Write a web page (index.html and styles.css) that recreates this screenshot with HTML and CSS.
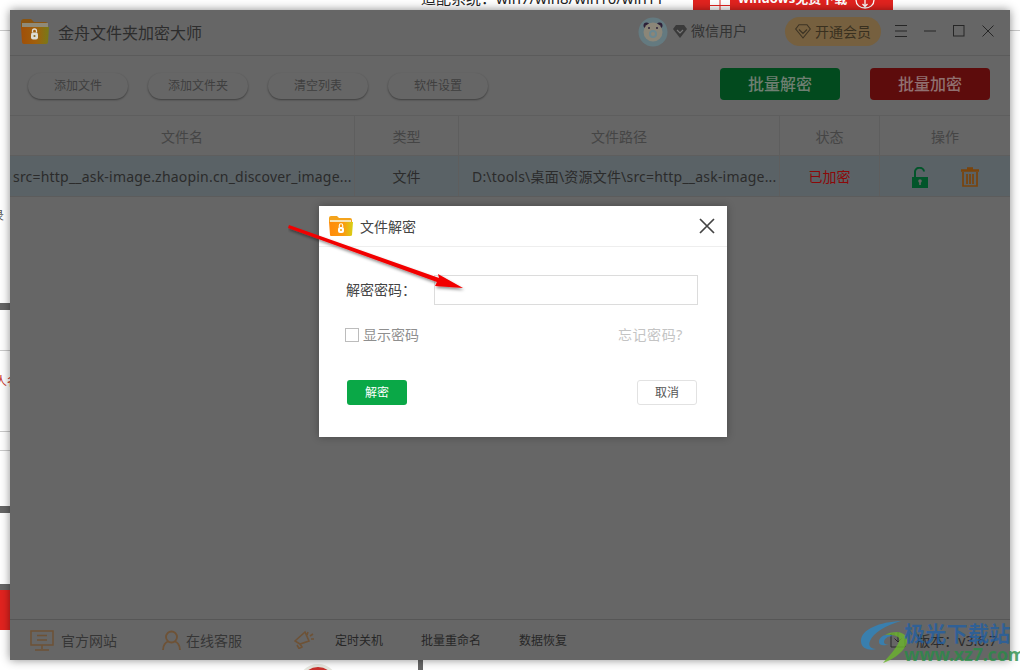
FILE: index.html
```html
<!DOCTYPE html>
<html lang="zh-CN">
<head>
<meta charset="utf-8">
<title>金舟文件夹加密大师</title>
<link rel="stylesheet" href="styles.css">
</head>
<body>
<div class="desk">
  <div class="bg-sys">适配系统：win7/win8/win10/win11</div>
  <div class="bg-dl">
    <svg class="bg-win" width="20" height="10" viewBox="0 0 20 10"><path d="M0 0h9.500v5H0zM10.500 0H20v5h-9.500zM0 6h9.500v4H0zM10.500 6H20v4h-9.500z" fill="#fff"/></svg>
    <span>windows免费下载</span>
    <svg class="bg-cloud" width="20" height="10" viewBox="0 0 20 10"><path d="M1 0c0 5 4 8 9 8s9-3 9-8M10 0v6M7.500 4L10 6.500 12.500 4" fill="none" stroke="#fff" stroke-width="1.300"/></svg>
  </div>
  <div class="bg-line bg-l1"></div>
  <div class="bg-line bg-r1"></div>
  <div class="bg-bar bg-b1"></div>
  <div class="bg-line bg-l2"></div>
  <div class="bg-line bg-l3"></div>
  <div class="bg-line bg-l4"></div>
  <div class="bg-bar bg-b2"></div>
  <div class="bg-bar bg-b3"></div>
  <div class="bg-red"></div>
  <div class="bg-txt bg-t1">录</div>
  <div class="bg-txt bg-t2">人名</div>
  <div class="bg-vbar"></div>
  <div class="bg-circle"></div>

  <div class="app">
    <header class="titlebar">
      <svg class="logo" width="30" height="28" viewBox="0 0 30 28">
        <defs><linearGradient id="lg1" x1="0" x2="1" y1="0" y2="0"><stop offset="0" stop-color="#a04f08"/><stop offset=".55" stop-color="#a0600c"/><stop offset="1" stop-color="#777a18"/></linearGradient></defs>
        <path d="M1 5q0-3 3-3h7l3 3h11q3 0 3 3v4H1z" fill="#8a5410"/>
        <path d="M2 6h26v4H2z" fill="#8f8a78"/>
        <path d="M1 10h28l-1 15q0 2-2 2H4q-2 0-2-2z" fill="url(#lg1)"/>
        <rect x="11" y="15.500" width="7" height="7" rx="2" fill="#dcdcd4"/>
        <path d="M12.500 15.500v-1.500a2 2 0 0 1 4 0v1.500" fill="none" stroke="#dcdcd4" stroke-width="1.300"/>
        <circle cx="14.500" cy="19" r="1.100" fill="#8a6a20"/>
      </svg>
      <h1 class="app-name">金舟文件夹加密大师</h1>
      <div class="title-right">
        <svg class="avatar" width="30" height="30" viewBox="0 0 30 30">
          <circle cx="15" cy="15" r="14.500" fill="#647a80"/>
          <circle cx="8.500" cy="8.500" r="3" fill="#2c2038"/><circle cx="21.500" cy="8.500" r="3" fill="#2c2038"/>
          <circle cx="15" cy="15" r="9.500" fill="#8b8678"/>
          <circle cx="15" cy="17" r="4" fill="#6b8790"/><circle cx="15" cy="17" r="2" fill="#8b8678"/>
          <circle cx="11" cy="11" r="1" fill="#2c2038"/><circle cx="19" cy="11" r="1" fill="#2c2038"/>
        </svg>
        <svg class="gem" width="14" height="13" viewBox="0 0 14 13"><path d="M3 0h8l3 4-7 9-7-9z" fill="#3a3a3a"/><path d="M4 5l3 3 3-3" fill="none" stroke="#777" stroke-width="1.200"/></svg>
        <span class="user">微信用户</span>
        <div class="vip">
          <svg width="16" height="15" viewBox="0 0 16 15"><path d="M4 .7h8l3.300 4.300L8 14 .7 5z M4 5.500l4 4 4-4" fill="none" stroke="#3c3324" stroke-width="1.100"/></svg>
          <span>开通会员</span>
        </div>
        <div class="win-ctl">
          <svg width="12" height="12" viewBox="0 0 12 12"><path d="M0 .5h12M0 6h12M0 11.500h12" stroke="#262626" stroke-width="1"/></svg>
          <svg width="12" height="12" viewBox="0 0 12 12"><path d="M0 6h12" stroke="#262626" stroke-width="1"/></svg>
          <svg width="12" height="12" viewBox="0 0 12 12"><rect x=".5" y=".5" width="10.500" height="10.500" fill="none" stroke="#262626" stroke-width="1"/></svg>
          <svg width="12" height="12" viewBox="0 0 12 12"><path d="M.5.5l11 11M11.500.5l-11 11" stroke="#262626" stroke-width="1"/></svg>
        </div>
      </div>
    </header>

    <div class="toolbar">
      <button class="pill">添加文件</button>
      <button class="pill">添加文件夹</button>
      <button class="pill">清空列表</button>
      <button class="pill">软件设置</button>
      <div class="toolbar-gap"></div>
      <button class="batch batch-green">批量解密</button>
      <button class="batch batch-red">批量加密</button>
    </div>

    <div class="grid grid-head">
      <div class="cell">文件名</div>
      <div class="cell">类型</div>
      <div class="cell">文件路径</div>
      <div class="cell">状态</div>
      <div class="cell cell-last">操作</div>
    </div>
    <div class="grid grid-row">
      <div class="cell cell-left">src=http__ask-image.zhaopin.cn_discover_image...</div>
      <div class="cell cell-dark">文件</div>
      <div class="cell cell-path">D:\tools\桌面\资源文件\src=http__ask-image...</div>
      <div class="cell cell-status">已加密</div>
      <div class="cell cell-last cell-ops">
        <svg width="17" height="21" viewBox="0 0 17 21"><path d="M4 10V5a4.500 4 0 0 1 9 -.5" fill="none" stroke="#02552a" stroke-width="2"/><path d="M1 10h16v11H1z" fill="#02552a"/><circle cx="9" cy="14" r="1.800" fill="#666"/><path d="M8.200 14h1.600v4H8.200z" fill="#666"/></svg>
        <svg width="18" height="20" viewBox="0 0 18 20"><path d="M6 1.500h6M0 3.500h18" stroke="#7a440c" stroke-width="2.400"/><path d="M2 5v14h14V5M6 7v10M9 7v10M12 7v10" fill="none" stroke="#7a440c" stroke-width="1.700"/></svg>
      </div>
    </div>

    <div class="app-body"></div>

    <footer class="footer">
      <div class="foot-item foot-site">
        <svg width="24" height="21" viewBox="0 0 24 21"><path d="M1 1h22v14H1zM12 15v4M5 20h14M7 5.500h10M7 10h10" fill="none" stroke="#6e5236" stroke-width="1.500"/></svg>
        <span>官方网站</span>
      </div>
      <div class="foot-item foot-service">
        <svg width="19" height="20" viewBox="0 0 19 20"><circle cx="9.500" cy="7" r="5.500" fill="none" stroke="#6e5236" stroke-width="1.800"/><path d="M1 20c0-5 3-8 5-8.500M18 20c0-5-3-8-5-8.500" fill="none" stroke="#6e5236" stroke-width="1.800"/></svg>
        <span>在线客服</span>
      </div>
      <div class="foot-item foot-timer">
        <svg width="22" height="20" viewBox="0 0 22 20"><path d="M1 12l10-9 4 9-9 3zM6 15l2 3-3 1.500-2-3.500M14 3l-1 3M19 5l-3 2M20 10h-3" fill="none" stroke="#6e5236" stroke-width="1.600"/></svg>
        <span class="foot-small foot-s1">定时关机</span>
      </div>
      <span class="foot-small foot-s2">批量重命名</span>
      <span class="foot-small foot-s3">数据恢复</span>
      <div class="foot-version">
        <svg width="16" height="16" viewBox="0 0 16 16"><path d="M5 2H1v13h14V6" fill="none" stroke="#2b2b2b" stroke-width="1"/><path d="M8 0v9M4.500 6.500L8 10l3.500-3.500" fill="none" stroke="#2b2b2b" stroke-width="1"/></svg>
        <span>版本：v3.6.7</span>
      </div>
    </footer>
  </div>

  <section class="dialog">
    <div class="dlg-head">
      <svg width="24" height="22" viewBox="0 0 24 22">
        <defs><linearGradient id="lg2" x1="0" x2="1" y1="0" y2="0"><stop offset="0" stop-color="#ff8a0a"/><stop offset=".6" stop-color="#fb9a10"/><stop offset="1" stop-color="#d6d216"/></linearGradient></defs>
        <path d="M0 3q0-2 2-2h6l2 2h11q2 0 2 2v3H0z" fill="#f4a31c"/>
        <path d="M1 5h21v3H1z" fill="#f6e3b8"/>
        <path d="M0 7h24l-1 13q0 1-2 1H2q-1 0-1-1z" fill="url(#lg2)"/>
        <rect x="9" y="12" width="6" height="6" rx="2" fill="#fff"/>
        <path d="M10.300 12v-1.500a1.700 1.700 0 0 1 3.400 0V12" fill="none" stroke="#fff" stroke-width="1.100"/>
        <circle cx="12" cy="15" r="1" fill="#f0a020"/>
      </svg>
      <span class="dlg-title">文件解密</span>
      <svg class="dlg-x" width="16" height="16" viewBox="0 0 16 16"><path d="M1 1l14 14M15 1L1 15" stroke="#444" stroke-width="1.700"/></svg>
    </div>
    <div class="dlg-body">
      <div class="pw-row">
        <label class="pw-label">解密密码：</label>
        <div class="pw-input"></div>
      </div>
      <div class="opt-row">
        <span class="check"></span>
        <span class="show-pw">显示密码</span>
        <span class="forgot">忘记密码?</span>
      </div>
      <div class="btn-row">
        <button class="ok">解密</button>
        <button class="cancel">取消</button>
      </div>
    </div>
  </section>

  <svg class="arrow" width="190" height="75" viewBox="0 0 190 75">
    <defs><filter id="sh" x="-10%" y="-30%" width="120%" height="170%"><feDropShadow dx="1" dy="2" stdDeviation="1.500" flood-color="#000" flood-opacity=".45"/></filter></defs>
    <path d="M0 3L1 0L151 53L150 49L175 63L147 61L149 57Z" fill="#f20505" filter="url(#sh)"/>
  </svg>

  <div class="wm">
    <svg class="wm-logo" width="50" height="42" viewBox="0 0 50 42">
      <path d="M41 0C20 1 1 8 1 20c0 8 9 10 15 8-6 0-8-4-6-8C13 12 26 4 41 0z" fill="#2e86c1"/>
      <path d="M19 21c0-6 8-9 14-6-6 0-9 3-9 6 0 2 2 3 5 2-4 2-10 2-10-2z" fill="#2e86c1"/>
      <path d="M38 11c-6 0-10 1-13 3 5-1 12 0 14 3 2 5-8 16-16 25 12-4 24-14 24-22 0-5-3-8-9-9z" fill="#6cb52d"/>
    </svg>
    <div class="wm-cn">极光下载站</div>
    <div class="wm-en">www.xz7.com</div>
  </div>
</div>
</body>
</html>
```
FILE: styles.css
```css
* { box-sizing: border-box; }
html, body { margin: 0; padding: 0; }
body { font-family: "Noto Sans", "Noto Sans CJK SC", sans-serif; }
button { font-family: inherit; padding: 0; margin: 0; border: 0; }
.desk { position: relative; width: 1020px; height: 670px; overflow: hidden; background: #fff; }

.bg-sys { position: absolute; left: 421px; top: -13px; font-size: 15px; line-height: 22px; color: #222; white-space: nowrap; }
.bg-dl { position: absolute; left: 693px; top: 0; width: 200px; height: 10px; background: #e2231f; color: #fff; overflow: hidden; }
.bg-dl span { position: absolute; left: 45px; top: -12px; font-size: 13px; line-height: 20px; font-weight: 700; white-space: nowrap; }
.bg-win { position: absolute; left: 17px; top: 0; }
.bg-cloud { position: absolute; left: 162px; top: 0; }
.bg-line { position: absolute; height: 1px; background: #c9c9c9; }
.bg-l1 { left: 0; top: 30px; width: 10px; }
.bg-r1 { left: 1010px; top: 30px; width: 10px; }
.bg-l2 { left: 0; top: 350px; width: 10px; }
.bg-l3 { left: 0; top: 431px; width: 10px; }
.bg-l4 { left: 0; top: 450px; width: 10px; }
.bg-bar { position: absolute; left: 0; width: 10px; background: #666; }
.bg-b1 { top: 303px; height: 7px; }
.bg-b2 { top: 506px; height: 7px; }
.bg-b3 { top: 584px; height: 6px; }
.bg-red { position: absolute; left: 0; top: 590px; width: 10px; height: 40px; background: #e2231f; }
.bg-txt { position: absolute; font-size: 12px; line-height: 16px; white-space: nowrap; }
.bg-t1 { left: -8px; top: 208px; color: #555; }
.bg-t2 { left: -5px; top: 374px; color: #c8322a; }
.bg-vbar { position: absolute; left: 418px; top: 660px; width: 5px; height: 10px; background: #666; }
.bg-circle { position: absolute; left: 298px; top: 664px; width: 40px; height: 40px; border-radius: 50%; border: 3px solid #e8e8e0; background: #c9302c; }

.app { position: absolute; left: 10px; top: 10px; width: 1000px; height: 650px; background: #666; display: flex; flex-direction: column; box-shadow: 0 0 9px rgba(0,0,0,.45); }

.titlebar { flex: none; height: 46px; border-bottom: 1px solid #5b5b5b; display: flex; align-items: center; padding-left: 10px; }
.logo { flex: none; margin-top: -3px; }
.app-name { margin: 0 0 0 8px; font-size: 16px; font-weight: 400; color: #2d2d2d; line-height: 22px; white-space: nowrap; }
.title-right { margin-left: auto; display: flex; align-items: center; height: 100%; }
.avatar { flex: none; margin-top: -2px; }
.gem { flex: none; margin: -2px 0 0 5px; }
.user { margin: -3px 0 0 4px; font-size: 14px; color: #333; line-height: 18px; }
.vip { margin: -2px 0 0 38px; width: 96px; height: 29px; border-radius: 15px; background: #76603f; color: #39301f; display: flex; align-items: center; padding: 0 0 1px 10px; gap: 4px; font-size: 14px; }
.win-ctl { display: flex; align-items: center; gap: 17px; margin: -3px 16px 0 14px; }
.win-ctl svg { display: block; flex: none; }

.toolbar { flex: none; height: 60px; display: flex; align-items: flex-start; padding: 17px 20px 0 18px; gap: 20px; border-bottom: 1px solid #5e5e5e; }
.pill { width: 100px; height: 26px; border-radius: 13px; background: #666; color: #3f3f3f; font-size: 12px; padding-bottom: 2px; box-shadow: 0 1px 2px 0 rgba(0,0,0,.4); }
.toolbar-gap { flex: 1; }
.batch { width: 120px; height: 32px; border-radius: 4px; font-size: 16px; font-weight: 500; margin-top: -5px; padding-bottom: 2px; }
.batch + .batch { margin-left: 10px; }
.batch-green { background: #024a1e; color: #6f7f72; }
.batch-red { background: #5d0c0c; color: #907070; }

.grid { flex: none; display: grid; grid-template-columns: 345px 104px 321px 100px 130px; }
.grid-head { height: 40px; border-bottom: 1px solid #5e5e5e; font-size: 14px; color: #454545; }
.grid-row { height: 41px; background: #5a6266; border-bottom: 1px solid #5c5c5c; font-size: 14px; color: #2b2b2b; letter-spacing: .2px; }
.cell { display: flex; align-items: center; justify-content: center; border-right: 1px solid #5e5e5e; white-space: nowrap; overflow: hidden; }
.cell-last { border-right: 0; }
.cell-left { justify-content: flex-start; padding-left: 3px; }
.cell-dark { color: #2b2b2b; letter-spacing: 0; }
.cell-path { justify-content: flex-start; padding-left: 13px; }
.cell-status { color: #8c0808; letter-spacing: 0; }
.cell-ops { gap: 33px; padding-top: 2px; }

.app-body { flex: 1; }

.footer { flex: none; height: 41px; border-top: 1px solid #565656; display: flex; align-items: center; font-size: 14px; color: #363636; position: relative; }
.foot-item { display: flex; align-items: center; gap: 7px; }
.foot-site { margin-left: 20px; }
.foot-service { margin-left: 45px; gap: 5px; }
.foot-timer { margin-left: 52px; gap: 19px; margin-top: -2px; }
.foot-small { font-size: 12px; color: #262626; }
.foot-s1 { margin-top: 2px; }
.foot-s2 { margin-left: 38px; }
.foot-s3 { margin-left: 38px; }
.foot-version { margin-left: auto; margin-right: 13px; display: flex; align-items: center; gap: 10px; color: #2b2b2b; }

.dialog { position: absolute; left: 319px; top: 206px; width: 408px; height: 231px; background: #fff; box-shadow: 0 0 8px rgba(0,0,0,.3); display: flex; flex-direction: column; }
.dlg-head { flex: none; height: 41px; border-bottom: 1px solid #eeeeee; display: flex; align-items: center; padding-left: 10px; }
.dlg-title { margin-left: 7px; font-size: 14px; color: #444; }
.dlg-x { margin-left: auto; margin-right: 12px; }
.dlg-body { flex: 1; padding: 28px 30px 0 26px; display: flex; flex-direction: column; }
.pw-row { display: flex; align-items: center; height: 30px; margin-right: -1px; }
.pw-label { width: 89px; font-size: 14px; color: #444; padding: 0 0 3px 1px; }
.pw-input { width: 264px; height: 30px; border: 1px solid #dcdcdc; }
.opt-row { display: flex; align-items: center; margin-top: 18px; height: 22px; }
.check { width: 14px; height: 14px; border: 1px solid #bcbcbc; margin-top: 2px; }
.show-pw { margin-left: 4px; font-size: 14px; color: #8f8f8f; }
.forgot { margin-left: auto; margin-right: 14px; font-size: 14px; color: #c4c4c4; letter-spacing: .6px; }
.btn-row { display: flex; justify-content: space-between; align-items: center; margin-top: 35px; padding-left: 2px; }
.ok { width: 60px; height: 25px; border-radius: 3px; background: #0aa847; color: #fff; font-size: 12px; padding-bottom: 1px; }
.cancel { width: 60px; height: 25px; border-radius: 3px; background: #fff; border: 1px solid #e2e2e2; color: #555; font-size: 12px; padding-bottom: 1px; }

.arrow { position: absolute; left: 288px; top: 225px; }

.wm { position: absolute; left: 860px; top: 620px; width: 160px; height: 50px; }
.wm-logo { position: absolute; left: 0; top: 1px; opacity: .8; }
.wm-cn { position: absolute; left: 44px; top: 0; font-size: 21px; line-height: 26px; font-weight: 700; color: rgba(31,95,165,.75); white-space: nowrap; letter-spacing: .3px; }
.wm-en { position: absolute; left: 44px; top: 23px; font-size: 18px; line-height: 22px; font-weight: 700; color: rgba(40,140,70,.8); white-space: nowrap; letter-spacing: -.2px; }
```
